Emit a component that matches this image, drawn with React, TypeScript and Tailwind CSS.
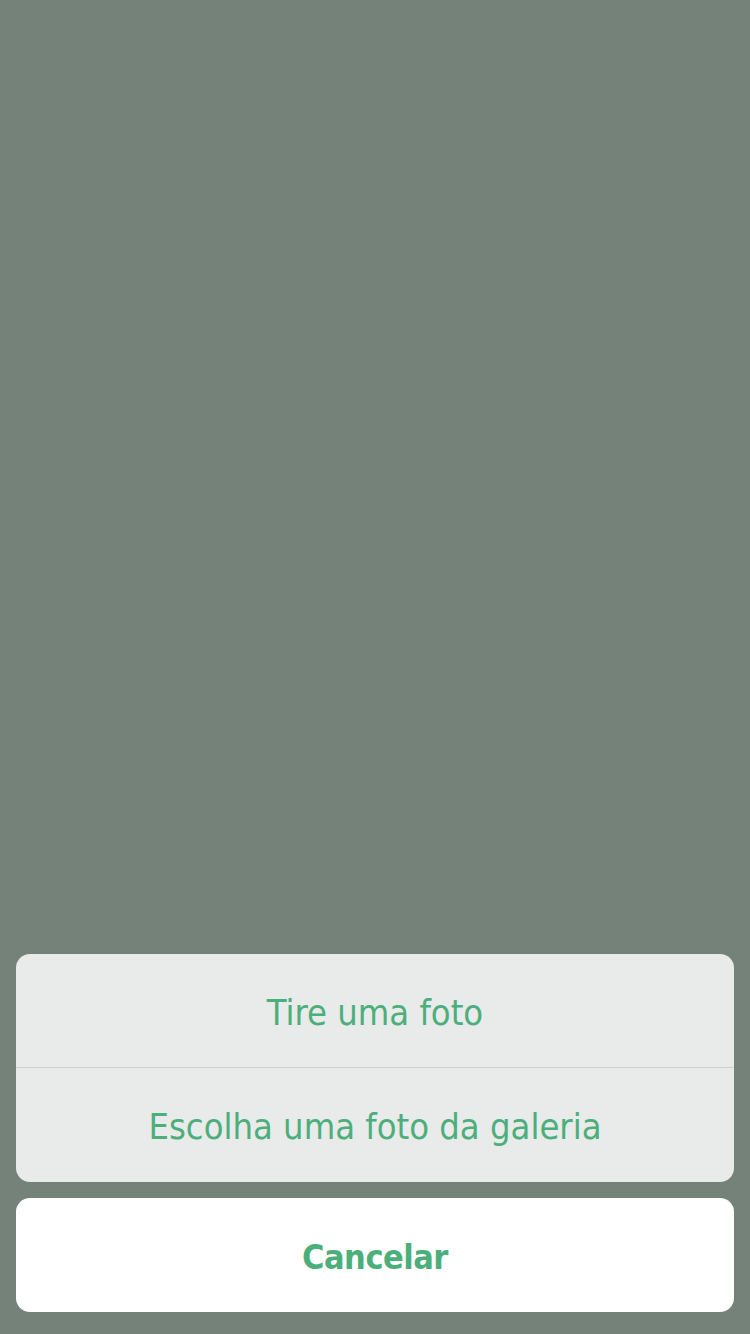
export default function App() {
  return (
    <div className="w-[750px] h-[1334px] bg-[#748279] flex flex-col justify-end px-4 pb-[22px] gap-4 font-['DejaVu_Sans_Condensed','Roboto',sans-serif]">
      <div className="rounded-[14px] bg-[#e9eaea] flex flex-col overflow-hidden">
        <button className="h-[113px] pt-1 flex items-center justify-center text-[36px] text-[#4caf7b]">
          Tire uma foto
        </button>
        <div className="h-px bg-[#cfd1d0]" />
        <button className="h-[114px] pt-1 flex items-center justify-center text-[36px] text-[#4caf7b]">
          Escolha uma foto da galeria
        </button>
      </div>
      <button className="h-[114px] pt-1 rounded-[14px] bg-white flex items-center justify-center text-[34px] font-bold text-[#4caf7b] tracking-[-0.5px]">
        Cancelar
      </button>
    </div>
  );
}
